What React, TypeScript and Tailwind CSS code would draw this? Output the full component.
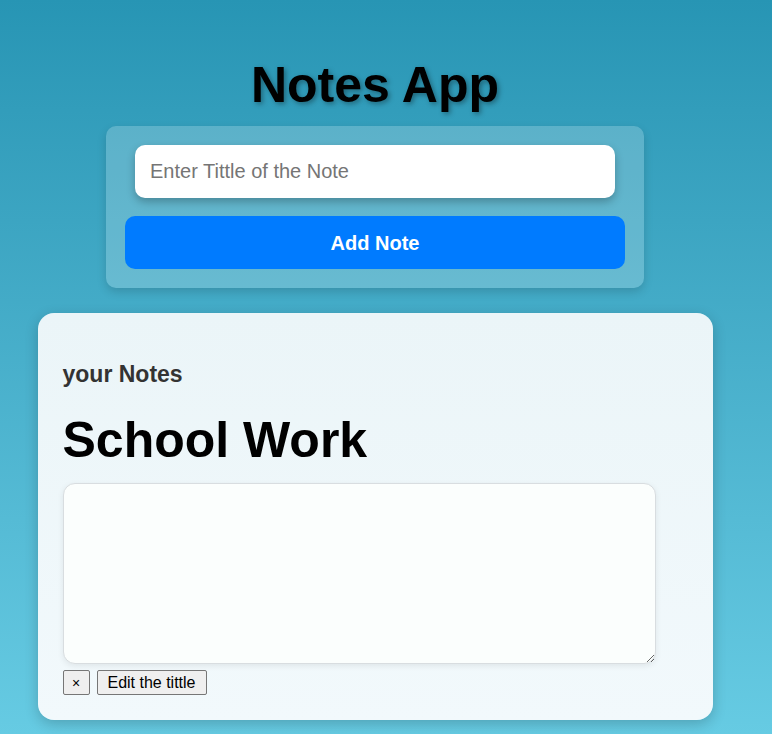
import React from "react";

export default function App() {
  return (
    <div
      className="min-h-screen w-full bg-gradient-to-b from-[#2795b4] to-[#66cbe3] overflow-hidden"
      style={{ fontFamily: '"Liberation Sans", Arial, sans-serif' }}
    >
      <div className="w-[750px] flex flex-col items-center pt-[56px]">
        <h1 className="text-[50px] leading-[58px] font-bold text-black [text-shadow:2px_2px_5px_rgba(0,0,0,0.35)]">
          Notes App
        </h1>

        <div className="mt-[12px] w-[538px] rounded-[10px] bg-white/20 p-[19px] shadow-[0_4px_10px_rgba(0,0,0,0.15)] flex flex-col items-center">
          <input
            autoFocus
            type="text"
            placeholder="Enter Tittle of the Note"
            className="w-[480px] h-[53px] rounded-[10px] bg-white px-[15px] text-[20px] text-black placeholder:text-[#757575] outline-none shadow-[0_4px_8px_rgba(0,0,0,0.25)]"
          />
          <button className="mt-[18px] w-[500px] h-[53px] rounded-[10px] bg-[#007bff] text-white text-[20px] font-bold">
            Add Note
          </button>
        </div>

        <div className="mt-[25px] w-[675px] rounded-[16px] bg-gradient-to-b from-[#ebf5f8] to-[#f2f9fc] px-[25px] pt-[25px] pb-[25px] shadow-[0_4px_14px_rgba(0,0,0,0.2)] flex flex-col items-start">
          <h3 className="mt-[23px] text-[23px] leading-[26px] font-bold text-[#333]">
            your Notes
          </h3>
          <h2 className="mt-[24px] text-[50px] leading-[58px] font-bold text-black">
            School Work
          </h2>
          <textarea className="mt-[14px] w-[593px] h-[181px] rounded-[12px] border border-[#d8dde0] bg-[#fbfefd] shadow-[0_2px_6px_rgba(0,0,0,0.08)] outline-none block" />
          <div className="mt-[6px] flex gap-[7px]">
            <button className="w-[27px] h-[25px] border border-[#767676] rounded-[2px] bg-[#efefef] text-[14px] leading-none text-black flex items-center justify-center">
              ×
            </button>
            <button className="w-[110px] h-[25px] border border-[#767676] rounded-[2px] bg-[#efefef] text-[16px] leading-none text-black flex items-center justify-center">
              Edit the tittle
            </button>
          </div>
        </div>
      </div>
    </div>
  );
}
